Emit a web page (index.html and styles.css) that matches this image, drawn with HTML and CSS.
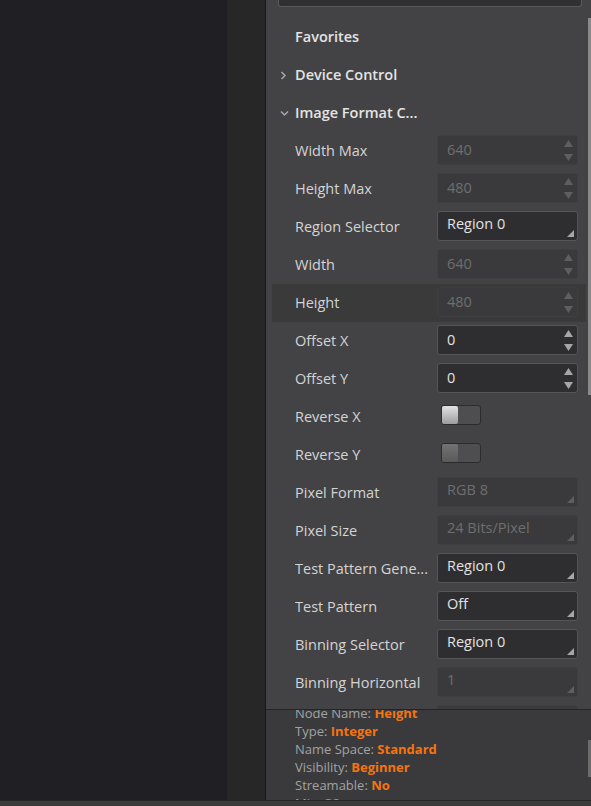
FILE: index.html
```html
<!DOCTYPE html>
<html>
<head>
<meta charset="utf-8">
<title>Features</title>
<link rel="stylesheet" href="styles.css">
</head>
<body>
<div class="app">
  <div class="main">
    <div class="viewer"></div>
    <div class="gutter"></div>
    <aside class="panel">
      <div class="search-wrap"><div class="search"></div></div>
      <div class="list-wrap">
        <div class="list">
          <div class="row group"><span class="chev"></span><span class="label">Favorites</span></div>
          <div class="row group"><span class="chev"><svg width="7" height="9" viewBox="0 0 7 9"><path d="M1.5 1 L5 4.5 L1.5 8" fill="none" stroke="#a8a8a8" stroke-width="1.5"/></svg></span><span class="label">Device Control</span></div>
          <div class="row group"><span class="chev"><svg width="9" height="7" viewBox="0 0 9 7"><path d="M1 1.5 L4.5 5 L8 1.5" fill="none" stroke="#a8a8a8" stroke-width="1.5"/></svg></span><span class="label">Image Format C...</span></div>

          <div class="row"><span class="label">Width Max</span>
            <div class="field spin disabled"><span class="val">640</span><span class="arrows"><svg width="9" height="7" viewBox="0 0 9 7"><path d="M0 7 L4.5 0 L9 7Z"/></svg><svg width="9" height="7" viewBox="0 0 9 7"><path d="M0 0 L9 0 L4.5 7Z"/></svg></span></div></div>
          <div class="row"><span class="label">Height Max</span>
            <div class="field spin disabled"><span class="val">480</span><span class="arrows"><svg width="9" height="7" viewBox="0 0 9 7"><path d="M0 7 L4.5 0 L9 7Z"/></svg><svg width="9" height="7" viewBox="0 0 9 7"><path d="M0 0 L9 0 L4.5 7Z"/></svg></span></div></div>
          <div class="row"><span class="label">Region Selector</span>
            <div class="field combo"><span class="val">Region 0</span><svg class="corner" width="7" height="7" viewBox="0 0 7 7"><path d="M7 0 L7 7 L0 7Z"/></svg></div></div>
          <div class="row"><span class="label">Width</span>
            <div class="field spin disabled"><span class="val">640</span><span class="arrows"><svg width="9" height="7" viewBox="0 0 9 7"><path d="M0 7 L4.5 0 L9 7Z"/></svg><svg width="9" height="7" viewBox="0 0 9 7"><path d="M0 0 L9 0 L4.5 7Z"/></svg></span></div></div>
          <div class="row sel"><span class="label">Height</span>
            <div class="field spin disabled"><span class="val">480</span><span class="arrows"><svg width="9" height="7" viewBox="0 0 9 7"><path d="M0 7 L4.5 0 L9 7Z"/></svg><svg width="9" height="7" viewBox="0 0 9 7"><path d="M0 0 L9 0 L4.5 7Z"/></svg></span></div></div>
          <div class="row"><span class="label">Offset X</span>
            <div class="field spin"><span class="val">0</span><span class="arrows"><svg width="9" height="7" viewBox="0 0 9 7"><path d="M0 7 L4.5 0 L9 7Z"/></svg><svg width="9" height="7" viewBox="0 0 9 7"><path d="M0 0 L9 0 L4.5 7Z"/></svg></span></div></div>
          <div class="row"><span class="label">Offset Y</span>
            <div class="field spin"><span class="val">0</span><span class="arrows"><svg width="9" height="7" viewBox="0 0 9 7"><path d="M0 7 L4.5 0 L9 7Z"/></svg><svg width="9" height="7" viewBox="0 0 9 7"><path d="M0 0 L9 0 L4.5 7Z"/></svg></span></div></div>
          <div class="row"><span class="label">Reverse X</span>
            <div class="toggle"><span class="knob on"></span></div></div>
          <div class="row"><span class="label">Reverse Y</span>
            <div class="toggle"><span class="knob"></span></div></div>
          <div class="row"><span class="label">Pixel Format</span>
            <div class="field combo disabled"><span class="val">RGB 8</span><svg class="corner" width="7" height="7" viewBox="0 0 7 7"><path d="M7 0 L7 7 L0 7Z"/></svg></div></div>
          <div class="row"><span class="label">Pixel Size</span>
            <div class="field combo disabled"><span class="val">24 Bits/Pixel</span><svg class="corner" width="7" height="7" viewBox="0 0 7 7"><path d="M7 0 L7 7 L0 7Z"/></svg></div></div>
          <div class="row"><span class="label">Test Pattern Gene...</span>
            <div class="field combo"><span class="val">Region 0</span><svg class="corner" width="7" height="7" viewBox="0 0 7 7"><path d="M7 0 L7 7 L0 7Z"/></svg></div></div>
          <div class="row"><span class="label">Test Pattern</span>
            <div class="field combo"><span class="val">Off</span><svg class="corner" width="7" height="7" viewBox="0 0 7 7"><path d="M7 0 L7 7 L0 7Z"/></svg></div></div>
          <div class="row"><span class="label">Binning Selector</span>
            <div class="field combo"><span class="val">Region 0</span><svg class="corner" width="7" height="7" viewBox="0 0 7 7"><path d="M7 0 L7 7 L0 7Z"/></svg></div></div>
          <div class="row"><span class="label">Binning Horizontal</span>
            <div class="field combo disabled"><span class="val">1</span><svg class="corner" width="7" height="7" viewBox="0 0 7 7"><path d="M7 0 L7 7 L0 7Z"/></svg></div></div>
          <div class="row"><span class="label">Binning Vertical</span>
            <div class="field combo disabled"><span class="val">1</span><svg class="corner" width="7" height="7" viewBox="0 0 7 7"><path d="M7 0 L7 7 L0 7Z"/></svg></div></div>
        </div>
        <div class="scroll"><div class="thumb"></div></div>
      </div>
      <div class="info">
        <div class="info-body">
          <div>Node Name: <b>Height</b></div>
          <div>Type: <b>Integer</b></div>
          <div>Name Space: <b>Standard</b></div>
          <div>Visibility: <b>Beginner</b></div>
          <div>Streamable: <b>No</b></div>
          <div>Min: <b>32</b></div>
        </div>
        <div class="scroll"><div class="thumb info-thumb"></div></div>
      </div>
    </aside>
  </div>
  <div class="status"></div>
</div>
</body>
</html>
```
FILE: styles.css
```css
html, body {
  margin: 0;
  padding: 0;
  background: #3b3b3b;
}
body {
  font-family: "Open Sans", "Noto Sans", "DejaVu Sans", sans-serif;
}
.app {
  width: 591px;
  height: 806px;
  display: flex;
  flex-direction: column;
  overflow: hidden;
}
.main {
  height: 800px;
  display: flex;
}
.viewer {
  width: 227px;
  background: #201f23;
}
.gutter {
  width: 38px;
  background: #272727;
  border-right: 1px solid #161616;
}
.panel {
  flex: 1;
  min-width: 0;
  background: #434345;
  display: flex;
  flex-direction: column;
}
.search-wrap {
  height: 18px;
  padding: 0 9px 0 12px;
  flex: none;
}
.search {
  height: 6px;
  background: #303032;
  border: 1px solid #5a5a5c;
  border-top: none;
  border-radius: 0 0 3px 3px;
}
.list-wrap {
  height: 691px;
  flex: none;
  display: flex;
  overflow: hidden;
}
.list {
  flex: 1;
  min-width: 0;
  padding-left: 6px;
  overflow: hidden;
}
.row {
  height: 38px;
  display: flex;
  align-items: flex-start;
  padding: 0 8px 0 23px;
}
.row.sel {
  background: #3a3a3b;
}
.row .label {
  width: 142px;
  flex: none;
  line-height: 38px;
  font-size: 14.5px;
  color: #d4d4d4;
  white-space: nowrap;
  overflow: hidden;
}
.row.group {
  padding-left: 8px;
}
.row.group .label {
  font-weight: 600;
  color: #e4e4e4;
  width: auto;
}
.chev {
  width: 15px;
  height: 38px;
  flex: none;
  display: flex;
  align-items: center;
}
.field {
  margin-top: 3px;
  width: 141px;
  height: 30px;
  box-sizing: border-box;
  border: 1px solid #555557;
  border-radius: 3px;
  background: #2e2e30;
  display: flex;
  color: #e2e2e2;
  fill: #a6a6a6;
}
.field.disabled {
  background: #3a3a3c;
  border-color: #3f3f41;
  color: #6e6e6e;
  fill: #5e5e5e;
}
.field .val {
  flex: 1;
  padding-left: 9px;
  font-size: 14.5px;
  line-height: 28px;
  white-space: nowrap;
}
.combo .val {
  line-height: 24px;
}
.arrows {
  width: 9px;
  margin-right: 4px;
  display: flex;
  flex-direction: column;
  justify-content: center;
  gap: 7px;
}
.arrows svg {
  display: block;
}
.corner {
  align-self: flex-end;
  margin: 0 3px 3px 0;
  flex: none;
}
.toggle {
  margin: 7px 0 0 4px;
  width: 40px;
  height: 20px;
  box-sizing: border-box;
  border: 1px solid #2c2c2e;
  border-radius: 3px;
  background: #4e4e50;
  display: flex;
}
.knob {
  width: 16px;
  height: 18px;
  border-radius: 2px;
  background: linear-gradient(#727272, #5a5a5a);
}
.knob.on {
  background: linear-gradient(#e2e2e2, #9c9c9c);
}
.scroll {
  width: 5px;
  flex: none;
}
.thumb {
  margin-left: 2px;
  width: 3px;
  height: 377px;
  background: #8a8a8a;
}
.info {
  height: 90px;
  flex: none;
  border-top: 1px solid #252527;
  background: #3a3a3c;
  display: flex;
  overflow: hidden;
}
.info-body {
  flex: 1;
  padding-left: 29px;
  margin-top: -6px;
  font-size: 13px;
  line-height: 18px;
  color: #a2a2a2;
  white-space: nowrap;
}
.info-body b {
  color: #f57410;
  font-weight: 700;
}
.info-thumb {
  margin-top: 30px;
  height: 37px;
  background: #6c6c6c;
}
.status {
  height: 5px;
  background: #3c3c3c;
  border-top: 1px solid #262626;
}
```
